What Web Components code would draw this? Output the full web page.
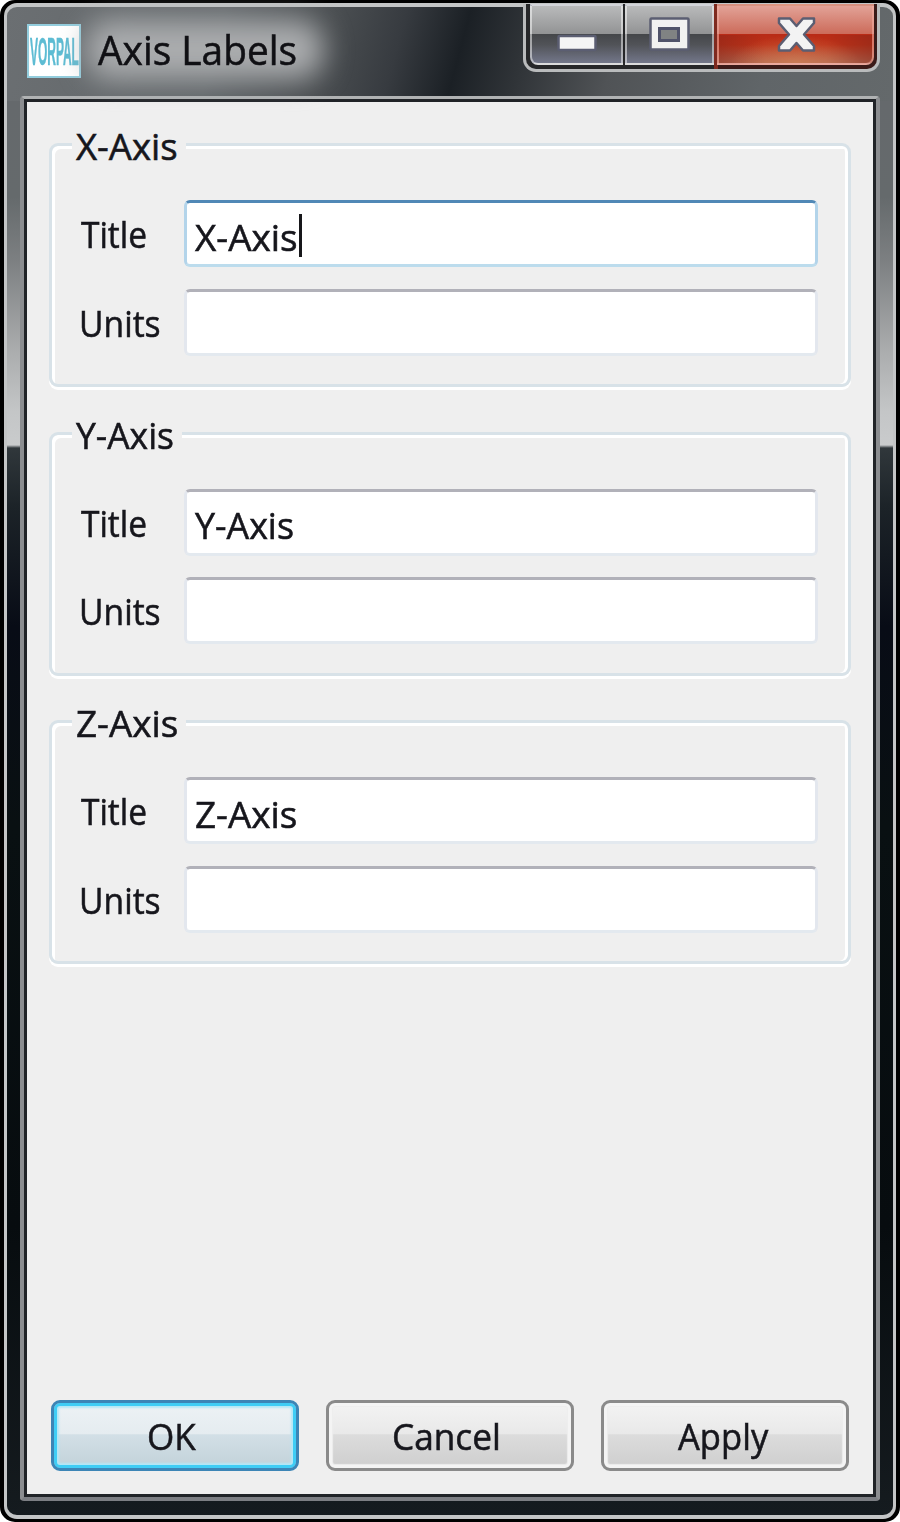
<!DOCTYPE html>
<html lang="en"><head><meta charset="utf-8"><title>Axis Labels</title>
<style>html,body{margin:0;background:#fff}body{width:900px;height:1522px;overflow:hidden;font-family:"Open Sans","Noto Sans",sans-serif;color:#16161c}</style></head>
<body>
<axis-window>
  <title-bar slot="title"></title-bar>
  <axis-group name="X-Axis" legend="102" value="X-Axis" fit="103" focused></axis-group>
  <axis-group name="Y-Axis" legend="98" value="Y-Axis" fit="99"></axis-group>
  <axis-group name="Z-Axis" legend="102" value="Z-Axis" fit="102"></axis-group>
  <push-button slot="actions" label="OK" fit="49" shift="-3.5" primary></push-button>
  <push-button slot="actions" label="Cancel" fit="109" shift="-4"></push-button>
  <push-button slot="actions" label="Apply" fit="90" shift="-2"></push-button>
</axis-window>
<script>
const define=(name,render,after)=>customElements.define(name,class extends HTMLElement{
  connectedCallback(){ if(this.shadowRoot)return; this.attachShadow({mode:'open'}).innerHTML=render(this); if(after)after(this); }
});

/* A single line of text condensed or widened to a given advance width */
define('fit-text',e=>`<style>
:host{display:block;flex:none;white-space:nowrap;width:${e.getAttribute('width')}px}
span{display:inline-block;transform-origin:0 50%;-webkit-text-stroke:.55px currentColor}
</style><span>${e.getAttribute('text')}</span>`,e=>{
  const s=e.shadowRoot.querySelector('span');
  s.style.transform=`scaleX(${+e.getAttribute('width')/s.offsetWidth})`;
});

define('text-field',e=>{
  const f=e.hasAttribute('focused'),v=e.getAttribute('value');
  return `<style>
:host{display:flex;align-items:center;box-sizing:border-box;height:67px;background:#fff;border:3px solid;border-radius:6px;
 border-color:${f?'#5088b6 #b3d4ea #bcdced #b3d4ea':'#b1b1b9 #e3e7ee #e3e9ef #e3e7ee'};padding:6px 0 0 8px;font-size:36.5px;line-height:50px}
i{width:3px;height:43px;background:#17171a;margin:-3px 0 0 1px}
</style>${v?`<fit-text text="${v}" width="${e.getAttribute('fit')}"></fit-text>`:''}${f?'<i></i>':''}`;});

define('axis-group',e=>`<style>
:host{display:block;box-sizing:border-box;height:247px;margin-bottom:41.7px;font-size:36.5px}
.frame{height:244px;box-sizing:border-box;border:3px solid #d8e2e8;border-radius:9px;box-shadow:inset 3px 3px 0 #fff,inset -3px 0 0 #fff,0 3px 0 #fff;padding-left:20px}
.legend{box-sizing:border-box;width:max-content;height:44px;line-height:44px;margin-top:-22px;padding:0 8px 0 4px;background:#efefef}
.rows{display:grid;grid-template-columns:104px 634px;row-gap:21.5px;margin:32px 0 0 8px;align-items:center}
.rows>fit-text{line-height:68px;height:67px}
.u{margin-left:-1px}.t{margin-left:1px}
</style><div class="frame"><div class="legend"><fit-text text="${e.getAttribute('name')}" width="${e.getAttribute('legend')}"></fit-text></div>
<div class="rows"><fit-text class="t" text="Title" width="66"></fit-text><text-field value="${e.getAttribute('value')}" fit="${e.getAttribute('fit')}" ${e.hasAttribute('focused')?'focused':''}></text-field>
<fit-text class="u" text="Units" width="82"></fit-text><text-field></text-field></div></div>`);

define('push-button',e=>{const p=e.hasAttribute('primary');return `<style>
:host{display:flex;align-items:center;justify-content:center;box-sizing:border-box;width:248px;height:71px;border:3px solid ${p?'#3c85b6':'#8a8a8a'};border-radius:9px;
 font-size:36.5px;line-height:50px;padding-top:1px;
 background:${p?'linear-gradient(#edf2f5,#e5ecf0 47%,#d2dfe6 49%,#c2d2d9)':'linear-gradient(#f3f3f3,#e9e9e9 47%,#dcdcdc 49%,#cecece)'};
 box-shadow:${p?'inset 0 0 0 3px #3fcdf5,inset 0 0 2px 5px #b4e7f6':'inset 0 0 0 3px #f4f4f4,inset 0 0 1px 4px #eeeeee'}}
fit-text{margin-left:${2*e.getAttribute('shift')}px}
</style><fit-text text="${e.getAttribute('label')}" width="${e.getAttribute('fit')}"></fit-text>`;});

define('app-logo',()=>`<style>
:host{display:flex;align-items:center;justify-content:center;box-sizing:border-box;width:54px;height:54px;border:2px solid #93cddd;background:#fff;color:#5dbcd3;font:bold 39px/50px "Liberation Sans",sans-serif}
fit-text{filter:blur(.7px);margin-top:2px}
</style><fit-text text="VORPAL" width="49"></fit-text>`);

define('caption-buttons',()=>`<style>
:host{display:flex;box-sizing:border-box;width:357px;height:68px;border:3px solid #b9bbbc;border-top:0;border-radius:0 0 13px 13px;background:linear-gradient(90deg,#262729 188px,#7e2a1f 188px,#7e2a1f 192px,#3a1a18 192px);padding:0 4px 4px}
div{display:flex;justify-content:center;box-sizing:border-box;height:61px;border:2px solid #ffffff80;border-top-color:#ffffffb0;
 background:linear-gradient(#b9babb,#929394 49%,#45474a 50%,#515358 68%,#73778a)}
.min{width:93px;border-radius:0 0 0 8px}.max{width:89px;margin-left:2px}
.close{width:157px;margin-left:3px;border-radius:0 0 8px 0;border-color:#f0b0a490;
 background:radial-gradient(ellipse 65px 28px at 50% 100%,#d98a5b90,transparent),linear-gradient(90deg,#7d231870,transparent 30%,transparent 70%,#7d231870) 0 100%/100% 50% no-repeat,linear-gradient(#e2a297,#cc6b5a 49%,#b92b16 50%,#bc3219 68%,#b36952)}
svg{display:block}
</style>
<div class="min"><svg width="89" height="56"><rect x="26.5" y="30" width="37" height="14" rx="1" fill="#f5f5f5" stroke="#5b5e72" stroke-width="2.500"/></svg></div>
<div class="max"><svg width="85" height="56"><rect x="23.5" y="12.5" width="38" height="31" rx="1" fill="#f1f1f1" stroke="#5b5e72" stroke-width="2.5"/><rect x="32.500" y="22.500" width="19" height="12" fill="#808383" stroke="#50536a" stroke-width="3"/></svg></div>
<div class="close"><svg width="154" height="56"><path d="M60 12.500h11l6.500 7.500 6.500-7.500h11v4.500L85 28.500 95 40v4.500H84L77.500 37 71 44.500H60V40l10-11.500L60 17z" fill="#f3f3f3" stroke="#5b5e72" stroke-width="2.500" stroke-linejoin="round"/></svg></div>`);

define('title-bar',()=>`<style>
:host{display:flex;height:89px;align-items:flex-start}
app-logo{margin:17px 0 0 20px}
.name{position:relative;margin:15px 0 0 17px;font-size:41px;line-height:55px;color:#101014}
.name:before{content:"";position:absolute;inset:-2px -26px -2px -12px;border-radius:25px;background:#aaacae;filter:blur(14px)}
.name fit-text{position:relative}
caption-buttons{margin-left:auto;margin-right:13px;margin-top:-3px}
</style><app-logo></app-logo><div class="name"><fit-text text="Axis Labels" width="199"></fit-text></div><caption-buttons></caption-buttons>`);

define('axis-window',()=>`<style>
:host{display:block;box-sizing:border-box;width:900px;height:1522px;border:solid #000;border-width:3px 4px 3px 4px;border-radius:15px;background:#000}
.glass{box-sizing:border-box;height:1516px;border:3px solid #c3c5c6;border-width:4px 3px;border-radius:13px;display:flex;flex-direction:column;
 background:
 linear-gradient(105deg,#6b6f72 0,#62676a 24%,#4b4f52 36%,#373b40 44%,#1b2025 51%,#303438 58%,#505356 68%,#606568 85%,#64696b) 0 0/100% 94px no-repeat,
 linear-gradient(#65696c 94px,#656a6c 190px,#7d8082 255px,#a9abac 340px,#c4c6c7 405px,#c9cbcc 438px,#30373b 441px,#1c2328 500px,#080c16 620px,#091012 820px,#070c0f 1220px,#151b1f 1509px);}
.client{box-sizing:border-box;display:flex;flex-direction:column;margin:0 13px;height:1405px;border:4px solid #8b8d90;border-width:3px 4px 4px;border-color:#b0b2b3 #8b8d90 #7c7e83;border-radius:4px}
.pane{box-sizing:border-box;flex:1;display:flex;flex-direction:column;justify-content:space-between;border:3px solid #202327;background:#efefef;padding:41px 22px 23px 22px}
.actions{display:flex;justify-content:space-between;padding:0 2px 0 2px}
</style><div class="glass"><slot name="title"></slot><div class="client"><div class="pane"><div><slot></slot></div><div class="actions"><slot name="actions"></slot></div></div></div></div>`);
</script></body></html>
